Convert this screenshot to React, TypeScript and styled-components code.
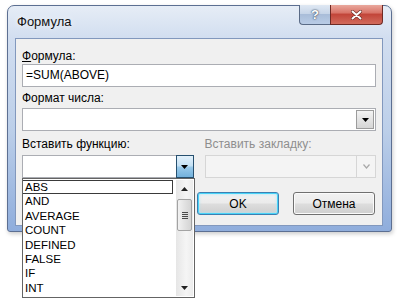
import React from 'react';
import styled, { createGlobalStyle } from 'styled-components';

const GlobalStyle = createGlobalStyle`
  html, body {
    margin: 0;
    padding: 0;
    background: #fff;
  }
  body {
    font-family: "Liberation Sans", Arial, sans-serif;
    font-size: 12px;
    color: #000;
  }
`;

const functions = ['ABS', 'AND', 'AVERAGE', 'COUNT', 'DEFINED', 'FALSE', 'IF', 'INT'];

function ArrowDown({ color = '#000' }: { color?: string }) {
  return (
    <svg width="7" height="4" viewBox="0 0 7 4">
      <path d="M0 0 H7 L3.5 4 Z" fill={color} />
    </svg>
  );
}

function ArrowUp({ color = '#222' }: { color?: string }) {
  return (
    <svg width="7" height="4" viewBox="0 0 7 4">
      <path d="M0 4 H7 L3.5 0 Z" fill={color} />
    </svg>
  );
}

function Chevron() {
  return (
    <svg width="7" height="5" viewBox="0 0 7 5">
      <path d="M0.5 0.5 L3.5 4 L6.5 0.5" fill="none" stroke="#a8a8a8" strokeWidth="1.2" />
    </svg>
  );
}

function Dialog() {
  return (
    <Page>
      <Window>
        <TitleBar>
          <Title>Формула</Title>
          <CaptionButtons>
            <HelpButton>?</HelpButton>
            <CloseButton>
              <svg width="11" height="10" viewBox="0 0 11 10">
                <path d="M1.5 1.5 L9.5 8.5 M9.5 1.5 L1.5 8.5" stroke="#6b2a22" strokeWidth="3.2" strokeLinecap="round" />
                <path d="M1.5 1.5 L9.5 8.5 M9.5 1.5 L1.5 8.5" stroke="#fff" strokeWidth="2" strokeLinecap="round" />
              </svg>
            </CloseButton>
          </CaptionButtons>
        </TitleBar>

        <Client>
          <Label>
            <u>Ф</u>ормула:
          </Label>
          <TextInput>=SUM(ABOVE)</TextInput>

          <Label $gap={4}>Формат числа:</Label>
          <Combo $gap={3}>
            <ComboField />
            <PlainArrow>
              <ArrowDown />
            </PlainArrow>
          </Combo>

          <Columns $gap={6}>
            <Label>Вставить функцию:</Label>
            <Label $disabled>Вставить закладку:</Label>
          </Columns>

          <Columns $gap={4}>
            <ComboHolder>
              <Combo>
                <ComboField />
                <ActiveArrow>
                  <ArrowDown />
                </ActiveArrow>
              </Combo>
              <DropList>
                <Items>
                  {functions.map((name, i) => (
                    <Item key={name} $selected={i === 0}>
                      {name}
                    </Item>
                  ))}
                </Items>
                <ScrollBar>
                  <ScrollButton>
                    <ArrowUp />
                  </ScrollButton>
                  <Track>
                    <Thumb>
                      <Grip />
                    </Thumb>
                  </Track>
                  <ScrollButton>
                    <ArrowDown color="#222" />
                  </ScrollButton>
                </ScrollBar>
              </DropList>
            </ComboHolder>
            <Combo $disabled>
              <ComboField $disabled />
              <DisabledArrow>
                <Chevron />
              </DisabledArrow>
            </Combo>
          </Columns>

          <ButtonRow>
            <Button $default>OK</Button>
            <Button>Отмена</Button>
          </ButtonRow>
        </Client>
      </Window>
    </Page>
  );
}

export default function App() {
  return (
    <>
      <GlobalStyle />
      <Dialog />
    </>
  );
}

const Page = styled.div`
  width: 400px;
  height: 306px;
  box-sizing: border-box;
  padding: 5px 0 0 7px;
  overflow: hidden;
`;

const Window = styled.div`
  width: 385px;
  height: 227px;
  box-sizing: border-box;
  display: flex;
  flex-direction: column;
  padding: 0 8px 5px 7px;
  border: 1px solid #5c6f92;
  border-radius: 7px 7px 3px 3px;
  background: linear-gradient(180deg, #e6edf6 0%, #d2def0 14%, #bccfe9 55%, #8faddc 100%);
  box-shadow: 1px 2px 4px rgba(0, 0, 0, 0.2);
`;

const TitleBar = styled.div`
  height: 32px;
  display: flex;
  justify-content: space-between;
  align-items: flex-start;
`;

const Title = styled.div`
  margin-left: 2px;
  line-height: 32px;
  font-size: 13px;
  color: #111;
  text-shadow: 0 0 6px rgba(255, 255, 255, 0.9);
`;

const CaptionButtons = styled.div`
  display: flex;
  margin-top: -1px;
  margin-right: 0;
`;

const CaptionButton = styled.div`
  height: 20px;
  display: flex;
  align-items: center;
  justify-content: center;
  box-sizing: border-box;
  border: 1px solid #5a6b86;
  border-top: none;
`;

const HelpButton = styled(CaptionButton)`
  width: 31px;
  border-right: none;
  border-radius: 0 0 0 4px;
  background: linear-gradient(180deg, #dfe8f3 0%, #c7d5e8 45%, #a9bdd9 50%, #b9cce6 100%);
  color: #fff;
  font-weight: bold;
  font-size: 13px;
  text-shadow: 0 0 2px #34425a, 0 0 1px #34425a;
`;

const CloseButton = styled(CaptionButton)`
  width: 53px;
  border-color: #6e2a24;
  border-radius: 0 0 4px 0;
  background: linear-gradient(180deg, #e9a89d 0%, #d9766a 40%, #c2463a 50%, #d26b5c 100%);
`;

const Client = styled.div`
  flex: 1;
  display: flex;
  flex-direction: column;
  box-sizing: border-box;
  padding: 10px 6px 0 6px;
  background: #f0f0f0;
  border: 1px solid #8298bd;
`;

const Label = styled.div<{ $gap?: number; $disabled?: boolean }>`
  margin-top: ${(p) => p.$gap ?? 0}px;
  line-height: 14px;
  font-size: 12px;
  color: ${(p) => (p.$disabled ? '#8e8e8e' : '#000')};
`;

const TextInput = styled.div`
  margin-top: 1px;
  height: 23px;
  box-sizing: border-box;
  padding: 0 3px;
  line-height: 21px;
  background: #fff;
  border: 1px solid #abadb3;
  font-size: 12px;
`;

const Combo = styled.div<{ $gap?: number; $disabled?: boolean }>`
  margin-top: ${(p) => p.$gap ?? 0}px;
  height: 23px;
  display: flex;
  box-sizing: border-box;
  background: ${(p) => (p.$disabled ? '#f4f4f4' : '#fff')};
  border: 1px solid ${(p) => (p.$disabled ? '#d6d6d6' : '#abadb3')};
`;

const ComboField = styled.div<{ $disabled?: boolean }>`
  flex: 1;
`;

const PlainArrow = styled.div`
  width: 18px;
  margin: 1px;
  display: flex;
  align-items: center;
  justify-content: center;
  box-sizing: border-box;
  border: 1px solid #9c9c9c;
  background: linear-gradient(180deg, #f4f4f4 0%, #e4e4e4 50%, #d6d6d6 100%);
`;

const ActiveArrow = styled.div`
  width: 18px;
  margin: -1px -1px -1px 0;
  display: flex;
  align-items: center;
  justify-content: center;
  box-sizing: border-box;
  border: 1px solid #27506f;
  background: linear-gradient(180deg, #e3f1fb 0%, #c6e2f5 45%, #98c9ea 55%, #73b1dc 100%);
`;

const DisabledArrow = styled.div`
  width: 18px;
  display: flex;
  align-items: center;
  justify-content: center;
  border-left: 1px solid #d6d6d6;
`;

const Columns = styled.div<{ $gap: number }>`
  margin-top: ${(p) => p.$gap}px;
  display: grid;
  grid-template-columns: 1fr 1fr;
  column-gap: 11px;
`;

const ComboHolder = styled.div`
  position: relative;
`;

const DropList = styled.div`
  position: absolute;
  top: 23px;
  left: 0;
  width: 173px;
  height: 120px;
  box-sizing: border-box;
  display: flex;
  background: #fff;
  border: 1px solid #646464;
  z-index: 2;
`;

const Items = styled.div`
  flex: 1;
  padding: 1px 0 0 0;
`;

const Item = styled.div<{ $selected?: boolean }>`
  height: 14.4px;
  box-sizing: border-box;
  padding-left: 2px;
  margin-right: 3px;
  line-height: 13px;
  font-size: 11.5px;
  color: #000;
  border: 1px solid ${(p) => (p.$selected ? '#3a3a3a' : 'transparent')};
  border-left: none;
`;

const ScrollBar = styled.div`
  width: 17px;
  margin: 1px 1px 1px 0;
  display: flex;
  flex-direction: column;
  background: linear-gradient(90deg, #e6e6e6 0%, #f5f5f5 60%, #ececec 100%);
`;

const ScrollButton = styled.div`
  height: 17px;
  display: flex;
  align-items: center;
  justify-content: center;
`;

const Track = styled.div`
  flex: 1;
  padding-top: 2px;
`;

const Thumb = styled.div`
  height: 32px;
  margin: 0 1px;
  display: flex;
  align-items: center;
  justify-content: center;
  box-sizing: border-box;
  border: 1px solid #a3a3a3;
  border-radius: 2px;
  background: linear-gradient(90deg, #f2f2f2 0%, #e2e2e2 50%, #d4d4d4 100%);
`;

const Grip = styled.div`
  width: 6px;
  height: 7px;
  background: repeating-linear-gradient(180deg, #4a4a4a 0 1px, transparent 1px 2px);
`;

const ButtonRow = styled.div`
  margin-top: 14px;
  display: flex;
  justify-content: flex-end;
  gap: 14px;
  padding-right: 1px;
`;

const Button = styled.div<{ $default?: boolean }>`
  width: 82px;
  height: 23px;
  box-sizing: border-box;
  display: flex;
  align-items: center;
  justify-content: center;
  font-size: 12px;
  border-radius: 3px;
  border: 1px solid ${(p) => (p.$default ? '#3c7fb1' : '#707070')};
  background: linear-gradient(180deg, #f2f2f2 0%, #ebebeb 48%, #dddddd 52%, #cfcfcf 100%);
  box-shadow: ${(p) => (p.$default ? 'inset 0 0 0 1px #48d3f8, inset 0 0 3px 1px #a8e6f8' : 'inset 0 0 0 1px #fbfbfb')};
`;
